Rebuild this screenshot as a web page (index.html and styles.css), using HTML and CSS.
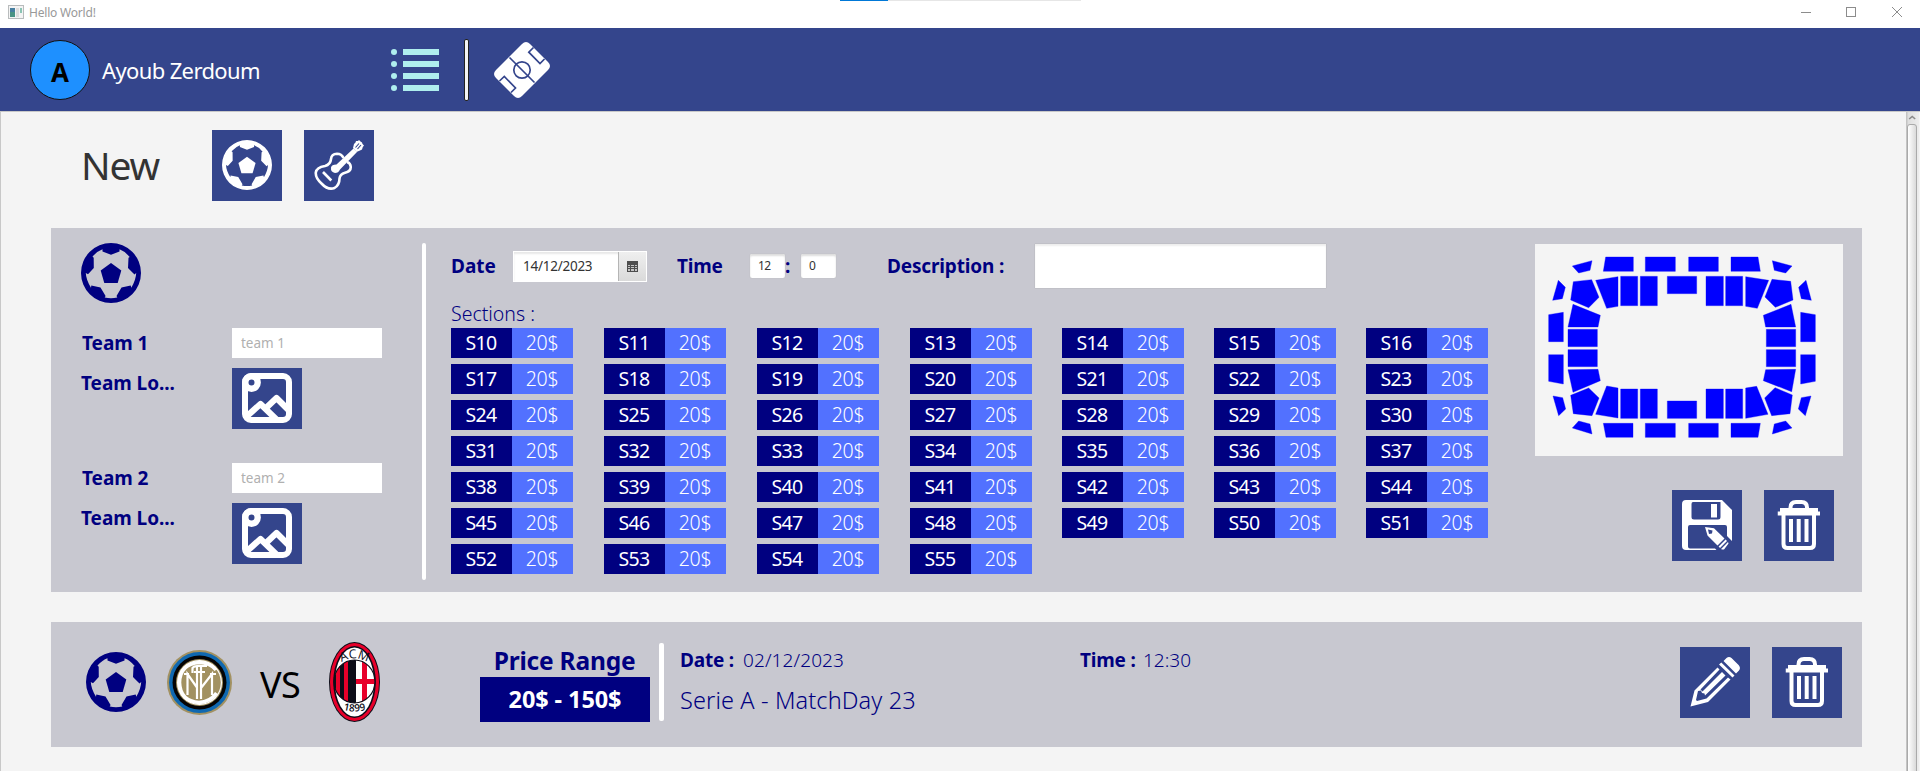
FILE: index.html
```
<!DOCTYPE html>
<html lang="en">
<head>
<meta charset="utf-8">
<title>Hello World!</title>
<link rel="stylesheet" href="styles.css">
</head>
<body>
<svg class="defs" width="0" height="0">
  <symbol id="ball" viewBox="0 0 60 60">
    <path fill-rule="evenodd" d="M30 0a30 30 0 1 1 0 60a30 30 0 1 1 0-60zM21.5 6.3Q16.500 8 11.500 13.500L12.700 14.700L12.800 25L7 31.300L4.800 30Q5 36.500 10 44.800L10.300 42.500L19.500 44.500L24.600 53L23.700 54.500Q30 56 36.300 54.500L35.500 53L40.500 44.500L49.700 42.500L50.300 44.800Q55 36.500 55.200 30L53.500 31.500L47 25L47.500 14.800L48.700 14Q43.500 8 38.500 6.300L38.500 8.500L30 11.800L21.500 8.500z"/>
    <path d="M30 20L40.300 27.500L36.700 40H23.300L19.700 27.500z"/>
  </symbol>
  <symbol id="image" viewBox="0 0 50 50">
    <g fill="none" stroke="currentColor">
      <rect x="3" y="3" width="44" height="44" rx="6" stroke-width="6"/>
      <circle cx="9.500" cy="9.500" r="6.200" stroke-width="6.400"/>
      <path d="M4 44L18.500 31L36 48M24 35L34.500 25L48 38.500" stroke-width="6.200" stroke-linejoin="round"/>
    </g>
  </symbol>
  <symbol id="trash" viewBox="0 0 50 50">
    <g fill="none" stroke="currentColor">
      <path d="M13 9V7.500Q13 2 18.500 2H24Q29.500 2 29.500 7.500V9" stroke-width="4"/>
      <path d="M6 15V44Q6 48 10 48H32.500Q36.500 48 36.500 44V15" stroke-width="4"/>
      <path d="M13.500 19V42M21.200 19V42M29 19V42" stroke-width="4"/>
    </g>
    <path d="M2.500 8H40.500V11.500H42.500V15.500H0V11.500H2.500z"/>
  </symbol>
  <symbol id="save" viewBox="0 0 50 50">
    <path fill-rule="evenodd" d="M4 0H40L50 10V41L45 36V27Q45 25 43 25H8Q6 25 6 27V46.500Q6 48.500 8 48.500H33L34.500 50H4Q0 50 0 46V4Q0 0 4 0zM11 2Q9.500 2 9.500 4V17Q9.500 19.500 12 19.500H36Q38.500 19.500 38.500 17V2z"/>
    <rect x="29" y="4" width="6" height="13.500"/>
    <path fill-rule="evenodd" d="M23 27L32 28.200L42.500 38.500L35.500 45.500L25.500 35.500zM26 29.500L27 34L30 33.500L30.500 30.500z"/>
    <path d="M43.600 39.600L45 41L38 48L36.600 46.600zM46 42L46.500 43.500L42 49.500L40 49.500L39 49z"/>
  </symbol>
  <symbol id="pencil" viewBox="0 0 50 50">
    <path d="M33.500 4L36.500 1Q39 -1 41.500 1L48.800 8.300Q51 11 49 13.500L46 16.500zM31.300 5.500L44.500 18.500L42.500 20.500L29 7.500z"/>
    <path d="M27.500 10.500L4.500 33.500L0.500 49.500L18 45L40.500 22.500L38 20.500L16.500 41.500L7 44L6 43L8 34L11 33.500L12 36L14.500 36.500L15 38.500L35.500 18.500L32 15L12.500 34.500L10.500 32.500L29.500 12.500z"/>
  </symbol>
</svg>

<header class="titlebar">
  <svg class="app-icon" viewBox="0 0 16 14"><rect x=".5" y=".5" width="15" height="13" fill="#f4f4f4" stroke="#b9bcbd"/><rect x="2" y="3" width="5" height="9" fill="#4a9384"/><rect x="2" y="3" width="5" height="4" fill="#467fa0"/><rect x="8" y="3" width="3" height="9" fill="#ddd"/><rect x="12" y="3" width="2" height="5" fill="#8bc4b4"/></svg>
  <span class="titlebar-text">Hello World!</span>
  <span class="progress"></span>
  <svg class="window-controls" viewBox="0 0 120 20" fill="none" stroke="#8c8c8c"><path d="M1 7.500H11"/><rect x="46.500" y="2.500" width="9" height="9"/><path d="M92 2L102 12M102 2L92 12"/></svg>
</header>

<nav class="navbar">
  <div class="avatar">A</div>
  <span class="username">Ayoub Zerdoum</span>
  <svg class="nav-list" viewBox="0 0 48 42"><circle cx="3" cy="3" r="3"/><circle cx="3" cy="15" r="3"/><circle cx="3" cy="27" r="3"/><circle cx="3" cy="39" r="3"/><path d="M12 0h36v6H12zM12 12h36v6H12zM12 24h36v6H12zM12 36h36v6H12z"/></svg>
  <span class="nav-line"></span>
  <svg class="nav-pitch" viewBox="0 0 56 56">
    <path fill="#fff" d="M28 2Q32 -2 36 2L54 20Q58 24 54 28L28 54Q24 58 20 54L2 36Q-2 32 2 28z"/>
    <g fill="none" stroke="#34458c" stroke-width="1.700"><circle cx="28" cy="28" r="8.200"/><path d="M15.500 15.500L40.500 40.500M39.500 5.500L34.800 10.200L46 21.500L50.500 17M5.500 39L10.300 34.500L21.500 46L17 50.500"/></g>
  </svg>
</nav>

<main class="content">
  <section class="new-row">
    <h1>New</h1>
    <button class="icon-btn"><svg class="i50" fill="currentColor"><use href="#ball"/></svg></button>
    <button class="icon-btn"><svg class="i50" viewBox="0 0 50 50" fill="none" stroke="currentColor">
      <path stroke-width="2.600" stroke-linejoin="round" d="M29.500 18Q27.500 13.800 23 13.800Q17.500 14 17 19Q16.500 24.500 11 26Q2.500 27.500 1.800 32.500Q1.300 38 7.500 43.500Q14 50.500 20.500 48Q25.500 45 25.500 38.500Q26 34 31 32.700Q36.800 31.500 36.800 27Q36.500 23 33 22"/>
      <path fill="currentColor" stroke="none" d="M39.500 8.500L43 12L26 29.500Q24.500 33 21 33Q16.500 32 17 27.500Q17.500 24.500 22.500 24.500z"/>
      <path fill="currentColor" stroke="none" d="M39 8L40 4L41.500 2.500L42 1L44 1L45 0L46.500 1.500L48 2.500L48.500 4L50 5.500L48.800 7L48 9.500L46 10.500L42.500 12z"/>
      <path stroke="#34458c" stroke-width="1.100" d="M41.500 7.500L45 3.500M43.500 9L47 5"/>
      <path stroke-width="2.600" d="M9 32L17.300 40.500"/>
    </svg></button>
  </section>

  <section class="card editor">
    <div class="teams">
      <svg class="i60"><use href="#ball"/></svg>
      <div class="team-form">
        <label>Team 1</label><input placeholder="team 1">
        <label class="lo">Team Lo...</label><button class="img-btn"><svg class="i50"><use href="#image"/></svg></button>
      </div>
      <div class="team-form">
        <label>Team 2</label><input placeholder="team 2">
        <label class="lo">Team Lo...</label><button class="img-btn"><svg class="i50"><use href="#image"/></svg></button>
      </div>
    </div>
    <span class="rule tall"></span>
    <div class="details">
      <div class="fields">
        <b class="w-date">Date</b>
        <div class="datepicker"><span>14/12/2023</span><i><svg viewBox="0 0 11 11" width="11" height="11"><path fill="#4d4d4d" d="M0 0h11v11H0z"/><path fill="#c4c4c4" d="M1 4h2v1H1zM4 4h3v1H4zM8 4h2v1H8zM1 6h2v1H1zM4 6h3v1H4zM8 6h2v1H8zM1 8h2v2H1zM4 8h3v2H4zM8 8h2v2H8z"/></svg></i></div>
        <b class="w-time">Time</b>
        <span class="num">12</span><b class="colon">:</b><span class="num">0</span>
        <b class="w-desc">Description :</b>
        <textarea></textarea>
      </div>
      <p class="sections-title">Sections :</p>
      <div class="sections" id="sections"></div>
    </div>
    <div class="side">
      <svg class="stadium" id="stadium" viewBox="0 0 924 636"></svg>
      <div class="actions"><button class="icon-btn"><svg class="i50"><use href="#save"/></svg></button><button class="icon-btn"><svg class="trash-i"><use href="#trash"/></svg></button></div>
    </div>
  </section>

  <section class="card match">
    <svg class="i60"><use href="#ball"/></svg>
    <svg class="inter" viewBox="0 0 65 65">
      <circle cx="32.500" cy="32.500" r="32.500" fill="#a29161"/><circle cx="32.500" cy="32.500" r="30.500" fill="#0f68b0"/><circle cx="32.500" cy="32.500" r="27" fill="#050505"/><circle cx="32.500" cy="32.500" r="23.500" fill="#a29161"/><circle cx="32.500" cy="32.500" r="22.500" fill="#fff"/><circle cx="32.500" cy="32.500" r="21.300" fill="#a29161"/>
      <g fill="none" stroke="#fff" stroke-width="2.200"><path stroke-width="3.600" d="M49 20Q43 12.500 32 12.500Q13 14 12.500 32.500Q13 51 32 52.500Q43 52 49.500 43"/><path d="M20.500 45V24L30 37.500M30 49V17M34 49V17M34 38L45 24V45M25.500 23V18Q27 16 30 16H40M27 22H38M17 24H22M43 24H49"/></g>
    </svg>
    <span class="vs">VS</span>
    <svg class="milan" viewBox="0 0 51 80">
      <ellipse cx="25.500" cy="40" rx="25.500" ry="40" fill="#0d0d18"/><ellipse cx="25.500" cy="40" rx="24.500" ry="39" fill="#e8002a"/><ellipse cx="25.500" cy="40" rx="21.300" ry="36" fill="#0d0d18"/><ellipse cx="25.500" cy="40" rx="19.600" ry="34.600" fill="#fff"/>
      <clipPath id="mc"><ellipse cx="25.500" cy="39.500" rx="20.500" ry="21.500"/></clipPath>
      <g clip-path="url(#mc)"><path fill="#0d0d18" d="M4 18h23v43H4z"/><path fill="#e8002a" d="M7 18h4v43H7zM15 18h4v43h-4zM33 18h5v43h-5zM27 37h20v5H27z"/></g>
      <ellipse cx="25.500" cy="39.500" rx="20.500" ry="21.500" fill="none" stroke="#0d0d18" stroke-width="1.200"/>
      <path id="arc1" d="M10 22Q25.500 11 41 22" fill="none"/><path id="arc2" d="M11 67Q25.500 72 40 67" fill="none"/>
      <text class="crest-top"><textPath href="#arc1" startOffset="50%" text-anchor="middle">ACM</textPath></text>
      <text class="crest-bottom"><textPath href="#arc2" startOffset="50%" text-anchor="middle">1899</textPath></text>
    </svg>
    <div class="price"><b>Price Range</b><strong>20$ - 150$</strong></div>
    <span class="rule short"></span>
    <div class="info">
      <div class="when"><div class="when-date"><b>Date :</b><span>02/12/2023</span></div><div class="when-time"><b>Time :</b><span>12:30</span></div></div>
      <div class="desc">Serie A - MatchDay 23</div>
    </div>
    <div class="actions"><button class="icon-btn"><svg class="i50"><use href="#pencil"/></svg></button><button class="icon-btn"><svg class="trash-i"><use href="#trash"/></svg></button></div>
  </section>
  <aside class="scrollbar"><svg viewBox="0 0 13 12" width="13" height="12" fill="none" stroke="#8a8a8a" stroke-width="1.600"><path d="M3.200 7L6.200 4.500L9.200 7"/></svg><span class="thumb"></span></aside>
</main>
<script src="app.js"></script>
</body>
</html>
```
FILE: styles.css
```
* { box-sizing: border-box; }
body { margin: 0; width: 1920px; height: 771px; overflow: hidden; display: flex; flex-direction: column; background: #f4f4f4; font-family: "Noto Sans", "Open Sans", sans-serif; color: #000080; }
.defs { position: absolute; }
button { border: 0; padding: 0; border-radius: 0; background: #34458c; color: #fff; fill: #fff; display: flex; align-items: center; justify-content: center; }
svg { flex: none; display: block; }
b { font-weight: 700; }

.titlebar { position: relative; height: 28px; flex: none; background: #fff; display: flex; align-items: flex-start; padding: 5px 0 0 8px; }
.app-icon { width: 16px; height: 14px; }
.titlebar-text { margin-left: 5px; font-size: 12px; line-height: 16px; color: #999; letter-spacing: -.2px; }
.window-controls { width: 120px; height: 20px; margin-left: auto; }
.progress { position: absolute; left: 840px; top: 0; width: 241px; height: 1px; background: linear-gradient(90deg, #0078d7 48px, #e6e6e6 48px); }

.navbar { height: 83px; flex: none; background: #34458c; display: flex; align-items: center; padding: 1px 0 0 30px; }
.avatar { width: 60px; height: 60px; border: 1px solid #111; border-radius: 50%; background: #1e90ff; color: #000; font: 700 26px/62px "Open Sans", sans-serif; text-align: center; }
.username { width: 289px; margin-left: 12px; color: #fff; font-size: 22px; letter-spacing: -.63px; }
.nav-list { width: 48px; height: 42px; fill: #afeeee; }
.nav-line { width: 5px; height: 62px; margin: 0 25px; background: #f4f4f4; border: 1px solid #222; border-radius: 2px; }
.nav-pitch { width: 56px; height: 56px; }

.content { position: relative; flex: 1; border: 1px solid #c8c8c8; border-width: 1px 0 0 1px; padding: 18px 0 0 50px; display: flex; flex-direction: column; }
.new-row { display: flex; gap: 22px; height: 98px; }
h1 { margin: 0; width: 139px; padding-left: 30px; font-size: 39px; font-weight: 400; line-height: 69px; color: #333; letter-spacing: -1.2px; }
.icon-btn { width: 70px; height: 71px; }
.i50 { width: 50px; height: 50px; }
.i60 { width: 60px; height: 60px; fill: #000080; }
.trash-i { width: 50px; height: 50px; transform: translateX(3.500px); }
.icon-btn .i50, .icon-btn .trash-i { margin-bottom: 1px; }

.card { width: 1811px; background: #c8c8d0; display: flex; }
.editor { height: 364px; padding-top: 15px; }
.teams { width: 371px; padding-left: 30px; }
.team-form { display: grid; grid-template-columns: 151px 150px; row-gap: 10px; margin-top: 25px; height: 110px; align-content: start; }
.team-form label { font-weight: 700; font-size: 19px; line-height: 30px; padding-left: 1px; white-space: nowrap; letter-spacing: -.05px; }
.team-form label.lo { padding-left: 0; }
.team-form input { width: 150px; height: 30px; border: 0; padding: 0 9px; font: 13.500px "Noto Sans", sans-serif; }
.team-form input::placeholder { color: #b0b0b0; }
.img-btn { width: 70px; height: 61px; padding-bottom: 1px; }
.rule { background: #fff; border-radius: 2px; flex: none; }
.tall { width: 4px; height: 337px; }
.details { width: 1109px; padding-left: 25px; }
.fields { display: flex; align-items: center; height: 46px; font-size: 19px; }
.w-date { width: 62px; }
.datepicker { width: 134px; height: 31px; background: #fff; border: 1px solid #fff; display: flex; color: #333; font-size: 13.500px; box-shadow: inset 0 2px 2px #e8e8e8; }
.datepicker span { flex: 1; padding-left: 9px; line-height: 29px; letter-spacing: -.25px; }
.datepicker i { width: 28px; border-left: 1px solid #b5b5b5; background: linear-gradient(#efefef, #dadada); display: flex; align-items: center; justify-content: center; }
.w-time { width: 73px; margin-left: 30px; letter-spacing: -.2px; }
.num { width: 35px; height: 24px; padding-left: 8px; background: #fff; border-radius: 2px; color: #333; font-size: 12px; line-height: 24px; letter-spacing: -.5px; box-shadow: inset 0 2px 2px #ddd, 0 0 1px #aaa; }
.colon { width: 16px; padding-left: 0; }
.w-desc { width: 148px; margin-left: 51px; white-space: nowrap; letter-spacing: -.15px; }
textarea { width: 291px; height: 44px; margin: 0; border: 0; resize: none; background: #fff; box-shadow: inset 0 2px 2px #eee, 0 0 1px #999; }
.sections-title { margin: 10px 0 0; height: 29px; font-size: 19.500px; font-weight: 300; line-height: 29px; }
.sections { display: grid; grid-template-columns: 153px 153px 153px 152px 152px 152px 122px; row-gap: 6px; }
.section { width: 122px; display: flex; color: #fff; font-size: 19.500px; line-height: 30px; text-align: center; }
.section span { width: 61px; height: 30px; background: #000080; letter-spacing: -.7px; padding-right: 1px; }
.section span + span { background: #5271ff; font-weight: 300; letter-spacing: -.3px; }
.stadium { width: 308px; height: 212px; margin-top: 1px; background: #f4f4f4; fill: #00f; stroke: #00f; stroke-opacity: .35; stroke-width: 3; }
.actions { display: flex; gap: 22px; }
.side .actions { margin: 34px 0 0 137px; }

.match { height: 125px; margin-top: 30px; padding-left: 35px; }
.match > .i60 { margin-top: 30px; }
.inter { width: 65px; height: 65px; margin: 28px 0 0 21px; }
.vs { width: 97px; padding-left: 28px; margin-top: 36px; color: #000; font-size: 36px; line-height: 53px; letter-spacing: -.5px; }
.milan { width: 51px; height: 80px; margin-top: 20px; }
.crest-top { font: 12.500px "Open Sans", sans-serif; fill: #0d0d18; }
.crest-bottom { font: 600 10px "Open Sans", sans-serif; fill: #0d0d18; }
.price { width: 170px; margin-left: 100px; padding-top: 22px; text-align: center; font-size: 24.500px; }
.price b { display: block; height: 33px; line-height: 33px; letter-spacing: -.2px; margin-right: 1px; }
.price strong { display: block; height: 45px; background: #000080; color: #fff; font-size: 23.500px; line-height: 45px; font-weight: 700; letter-spacing: -.1px; }
.short { width: 5px; height: 78px; margin: 21px 0 0 9px; }
.info { width: 1000px; margin-left: 16px; padding-top: 23px; font-size: 19px; font-weight: 300; }
.when { display: flex; line-height: 30px; height: 38px; }
.when-date { width: 400px; display: flex; }
.when-time { display: flex; }
.when-date b, .when-time b { width: 63px; white-space: nowrap; letter-spacing: -.2px; }
.when-date span { letter-spacing: .1px; }
.desc { font-size: 23.500px; line-height: 34px; letter-spacing: .12px; }
.match .actions { margin-top: 25px; }

.scrollbar { position: absolute; top: 0; right: 1px; bottom: 0; width: 13px; background: linear-gradient(90deg, #c4c4c4 1px, #dedede 2px, #ededed); }
.thumb { display: block; width: 10px; height: 670px; margin-left: 1px; border: 1px solid #aaa; border-radius: 3px; background: linear-gradient(90deg, #fff, #dadada); }
```
FILE: app.js
```
const grid = document.getElementById('sections');
for (let n = 10; n <= 55; n++) {
  const cell = document.createElement('div');
  cell.className = 'section';
  cell.innerHTML = `<span>S${n}</span><span>20$</span>`;
  grid.appendChild(cell);
}

// Stadium blocks: outer ring first, then the inner ring.
const blocks = [
  '212,39 295,39 295,82 205,82', '331,39 421,39 421,82 331,82', '461,39 550,39 550,82 461,82', '588,39 669,39 676,82 588,82',
  '112,66 171,50 165,79 131,87', '712,50 771,66 752,87 718,79', '70,109 91,130 82,164 53,169', '813,109 791,130 799,164 829,169',
  '41,212 85,205 85,293 41,293', '41,332 85,332 85,420 41,412', '797,205 841,212 841,293 797,293', '797,332 841,332 841,412 797,420',
  '54,456 83,461 92,495 71,515', '828,456 799,461 790,495 811,515',
  '112,552 131,531 165,540 171,570', '771,552 752,531 718,540 712,570',
  '205,538 294,538 294,580 213,580', '331,538 421,538 421,580 331,580', '461,538 550,538 550,580 461,580', '588,538 676,538 669,580 588,580',
  '115,113 170,107 192,160 161,191 107,168', '182,109 249,98 249,187 215,193', '257,97 308,97 308,185 257,185', '316,97 367,97 367,185 316,185',
  '397,97 485,97 485,149 397,149', '513,97 565,97 565,185 513,185', '572,97 623,97 623,185 572,185', '632,98 701,109 667,193 632,187',
  '711,106 767,112 774,168 721,190 690,159',
  '114,181 196,214 189,249 99,249', '99,256 187,256 187,308 99,308', '99,317 187,317 187,368 99,368', '99,377 189,376 196,410 114,445',
  '768,181 685,214 692,249 782,249', '694,256 782,256 782,308 694,308', '694,317 782,317 782,368 694,368', '782,376 692,377 685,410 770,443',
  '161,432 192,462 171,515 115,509 107,454', '215,426 249,432 249,522 182,511', '257,435 308,435 308,523 257,523', '316,435 367,435 367,523 316,523',
  '397,471 485,471 485,523 397,523', '513,435 565,435 565,523 513,523', '572,435 623,435 623,523 572,523', '632,432 665,427 699,511 632,523',
  '720,431 772,453 765,509 710,515 689,462'
];
document.getElementById('stadium').innerHTML = blocks.map(p => `<polygon points="${p}"/>`).join('');
```
